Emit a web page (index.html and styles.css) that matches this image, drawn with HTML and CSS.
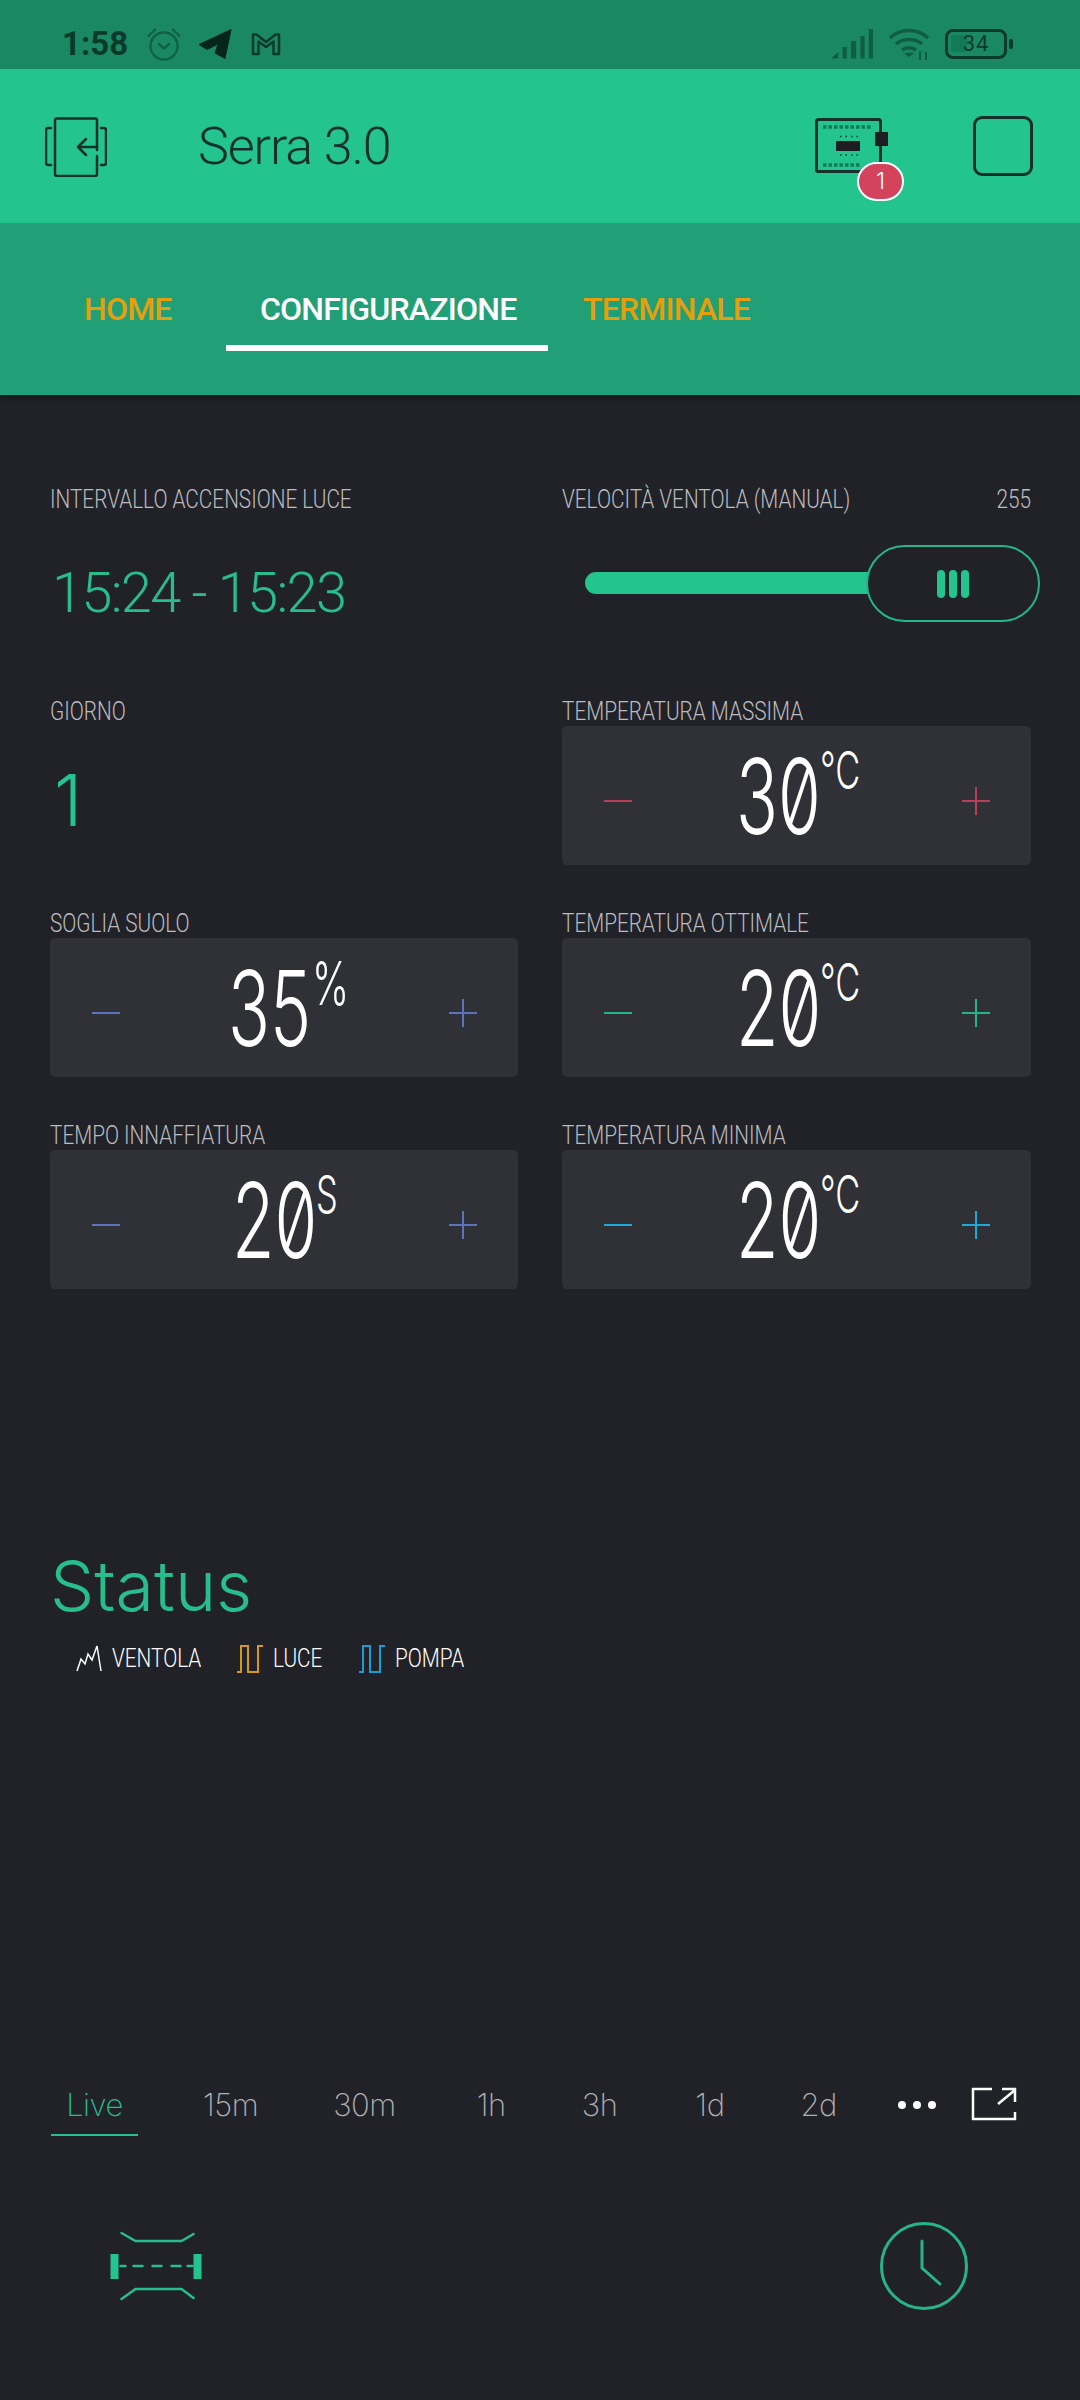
FILE: index.html
```html
<!DOCTYPE html>
<html lang="it">

<head>
    <meta charset="UTF-8">
    <meta name="viewport" content="width=device-width, initial-scale=1.0">
    <title>Serra 3.0</title>
    <link rel="stylesheet" href="styles.css">
</head>

<body>
    <!-- status bar -->
    <div class="status-bar">
        <span class="status-time">1:58</span>
        <svg class="status-icon alarm" viewBox="0 0 34 34" width="34" height="34" fill="none" stroke="#0f6247" stroke-width="2.4">
            <circle cx="17" cy="19" r="13.5" />
            <path d="M12 17l5 4.5 5-4.5" stroke-linecap="round" stroke-linejoin="round" />
            <path d="M1.5 9 8 2.5M32.500 9 26 2.500" stroke-linecap="round" />
        </svg>
        <svg class="status-icon plane" viewBox="0 0 34 30" width="34" height="30">
            <path d="M1 15.500 33 0.500 27 29.500 17 24 20 15 9 20.500 Z" fill="#06261b" stroke="#06261b" stroke-linejoin="round" />
        </svg>
        <svg class="status-icon mail" viewBox="0 0 30 24" width="30" height="24" fill="none" stroke="#0a3a2a" stroke-width="2.500">
            <path d="M2 22V2.500h3.500L15 10l9.500-7.500H28V22h-5.500V9.500L15 15 7.500 9.500V22Z" stroke-linejoin="round" />
        </svg>
        <div class="status-right">
            <svg viewBox="0 0 40 30" width="42" height="30" preserveAspectRatio="none" fill="#0f5e44">
                <path d="M0 29.500 7 23v6.500ZM11 18h4v11.500h-4ZM19 12h5v17.500h-5ZM28 7h4v22.500h-4ZM36 0h4v29.500h-4Z" />
            </svg>
            <svg viewBox="0 0 42 34" width="42" height="34" fill="none" stroke="#0f5e44" stroke-width="3.500">
                <path d="M2 11C12 1 30 1 40 11M8 17c7-6 19-6 26 0M14 23c4-3 10-3 14 0" />
                <path d="M21 30l-5-3.500c3-1.500 7-1.500 10 0Z" fill="#0f5e44" stroke="none" />
                <path d="M32 33V24M38 33v-8" stroke-width="2" />
            </svg>
            <div class="battery">
                <span class="battery-fill"></span>
                <span class="battery-level">34</span>
            </div>
            <span class="battery-tip"></span>
        </div>
    </div>

    <!-- app bar -->
    <header class="app-bar">
        <svg class="back-icon" viewBox="0 0 62 60" width="62" height="60" fill="none" stroke="#14302b" stroke-width="2.500" stroke-linecap="round" stroke-linejoin="round">
            <path d="M10 34V3.500Q10 1.500 12 1.500H50Q52 1.500 52 3.500V33M52 39V57Q52 59 50 59H12Q10 59 10 57V34" />
            <path d="M6 11H3Q1 11 1 13V46Q1 48 3 48H6M56 11H59Q61 11 61 13V46Q61 48 59 48H56" />
            <path d="M52 30H33M41 22l-8 8 8 8" />
        </svg>
        <h1 class="app-title">Serra 3.0</h1>
        <div class="device">
            <svg viewBox="0 0 74 56" width="74" height="56">
                <rect x="1.500" y="1.500" width="64" height="52" rx="2" fill="none" stroke="#14302b" stroke-width="3" />
                <path d="M8 9h48M8 47h38" stroke="#127a58" stroke-width="3.500" stroke-dasharray="3.500 2" fill="none" />
                <rect x="21" y="23" width="24" height="10" fill="#1c1e24" />
                <path d="M25 18.500h18M25 37h18" stroke="#14302b" stroke-width="1.500" stroke-dasharray="1.500 4" fill="none" />
                <rect x="60" y="14" width="13" height="14" fill="#1c1e24" />
            </svg>
            <span class="device-badge">1</span>
        </div>
        <span class="square-btn"></span>
    </header>

    <!-- tabs -->
    <nav class="tabs">
        <a class="tab tab-home">HOME</a>
        <a class="tab tab-conf active">CONFIGURAZIONE</a>
        <a class="tab tab-term">TERMINALE</a>
    </nav>

    <main class="content">
        <section class="widgets">
            <div class="widget">
                <div class="widget-label">INTERVALLO ACCENSIONE LUCE</div>
                <div class="time-value">15:24 - 15:23</div>
            </div>
            <div class="widget">
                <div class="widget-label slider-label"><span>VELOCITÀ VENTOLA (MANUAL)</span><span>255</span></div>
                <div class="slider">
                    <div class="slider-track"></div>
                    <div class="slider-knob"><i></i><i></i><i></i></div>
                </div>
            </div>

            <div class="widget">
                <div class="widget-label">GIORNO</div>
                <div class="day-value">1</div>
            </div>
            <div class="widget">
                <div class="widget-label">TEMPERATURA MASSIMA</div>
                <div class="stepper red">
                    <span class="step minus"></span>
                    <div class="step-value"><span class="num">30</span><span class="unit">°C</span></div>
                    <span class="step plus"></span>
                </div>
            </div>

            <div class="widget">
                <div class="widget-label">SOGLIA SUOLO</div>
                <div class="stepper blue">
                    <span class="step minus"></span>
                    <div class="step-value"><span class="num">35</span><span class="unit pct">%</span></div>
                    <span class="step plus"></span>
                </div>
            </div>
            <div class="widget">
                <div class="widget-label">TEMPERATURA OTTIMALE</div>
                <div class="stepper green">
                    <span class="step minus"></span>
                    <div class="step-value"><span class="num">20</span><span class="unit">°C</span></div>
                    <span class="step plus"></span>
                </div>
            </div>

            <div class="widget">
                <div class="widget-label">TEMPO INNAFFIATURA</div>
                <div class="stepper blue">
                    <span class="step minus"></span>
                    <div class="step-value"><span class="num">20</span><span class="unit sec">S</span></div>
                    <span class="step plus"></span>
                </div>
            </div>
            <div class="widget">
                <div class="widget-label">TEMPERATURA MINIMA</div>
                <div class="stepper cyan">
                    <span class="step minus"></span>
                    <div class="step-value"><span class="num">20</span><span class="unit">°C</span></div>
                    <span class="step plus"></span>
                </div>
            </div>
        </section>

        <!-- grafico -->
        <section class="chart">
            <h2 class="chart-title">Status</h2>
            <div class="legend">
                <div class="legend-item">
                    <svg viewBox="0 0 26 28" width="26" height="28" fill="none" stroke="#fff" stroke-width="1.500">
                        <path d="M1 26 5 14l4 5 3-10 4 6 5-14 4 25" />
                    </svg>
                    <span class="legend-name name-ventola">VENTOLA</span>
                </div>
                <div class="legend-item">
                    <svg viewBox="0 0 26 28" width="26" height="28" fill="none" stroke="#d9961c" stroke-width="2">
                        <path d="M0 27H4V1H11V27H21V1H26" />
                    </svg>
                    <span class="legend-name name-luce">LUCE</span>
                </div>
                <div class="legend-item">
                    <svg viewBox="0 0 26 28" width="26" height="28" fill="none" stroke="#1b9dd0" stroke-width="2">
                        <path d="M0 27H4V1H11V27H21V1H26" />
                    </svg>
                    <span class="legend-name name-pompa">POMPA</span>
                </div>
            </div>

            <div class="periods">
                <span class="period live">Live</span>
                <span class="period p-15">15m</span>
                <span class="period p-30">30m</span>
                <span class="period p-1h">1h</span>
                <span class="period p-3h">3h</span>
                <span class="period p-1d">1d</span>
                <span class="period p-2d">2d</span>
                <span class="more"><i></i><i></i><i></i></span>
                <svg class="expand" viewBox="0 0 46 34" width="46" height="34" fill="none" stroke="#fff" stroke-width="2.500">
                    <path d="M21 2H2V32H44V25" />
                    <path d="M27 17 44 3M31 2H44V15" />
                </svg>
            </div>
        </section>

        <section class="bottom-icons">
            <svg viewBox="0 0 92 70" width="95" height="70" fill="none" stroke="#27bd8c" stroke-width="2.500" stroke-linecap="round">
                <path d="M11 2 25 10H71L83 3M11 68 25 58H71L83 67" />
                <path d="M10 35H15M23 35H32M42 35H51M61 35H70M77 35H82" />
                <rect x="0" y="23" width="8" height="25" fill="#23c48e" stroke="none" />
                <rect x="83" y="23" width="8" height="25" fill="#23c48e" stroke="none" />
            </svg>
            <svg viewBox="0 0 90 90" width="90" height="90" fill="none" stroke="#27b488" stroke-width="3" stroke-linecap="round">
                <circle cx="45" cy="45" r="42.500" />
                <path d="M43 20V47L61 63" />
            </svg>
        </section>
    </main>
</body>

</html>
```

FILE: styles.css
```css
/* global */
body {
    margin: 0;
    padding: 0;
    width: 1080px;
    height: 2400px;
    overflow: hidden;
    background-color: #212227;
    font-family: Inter, "Liberation Sans", sans-serif;
    font-weight: 300;
}

/* status bar */
.status-bar {
    height: 69px;
    background-color: #1b8864;
    display: flex;
    align-items: center;
    padding-top: 18px;
    padding-left: 62px;
    padding-right: 67px;
    box-sizing: border-box;
}

.status-time {
    font-family: Roboto, sans-serif;
    font-weight: 700;
    font-size: 33px;
    color: #0a3a2a;
    margin-right: 19px;
}

.status-icon {
    margin-right: 17px;
}

.status-icon.plane {
    margin-left: 0;
    margin-right: 19px;
}

.status-right {
    margin-left: auto;
    display: flex;
    align-items: center;
    gap: 15px;
}

.battery {
    position: relative;
    width: 62px;
    height: 30px;
    box-sizing: border-box;
    border: 3.5px solid #0a3a2a;
    border-radius: 8px;
    text-align: center;
    font-family: Roboto, sans-serif;
    font-weight: 400;
    font-size: 22px;
    line-height: 23px;
    color: #0a3a2a;
    letter-spacing: 1px;
}

.battery-fill {
    position: absolute;
    left: 3px;
    top: 3px;
    width: 16px;
    height: 17px;
    border-radius: 2px;
    background-color: #137a58;
}

.battery-level {
    position: relative;
}

.battery-tip {
    width: 4px;
    height: 10px;
    background-color: #0a3a2a;
    border-radius: 2px;
    margin-left: -13px;
}

/* app bar */
.app-bar {
    height: 154px;
    background-color: #23c48e;
    display: flex;
    align-items: center;
    padding-left: 45px;
    box-sizing: border-box;
}

.back-icon {
    margin-top: 1px;
}

.app-title {
    margin: 0 0 0 91px;
    font-family: Roboto, sans-serif;
    font-size: 52px;
    font-weight: 300;
    color: #14302b;
    letter-spacing: -1.1px;
}

.device {
    position: relative;
    margin-left: auto;
    width: 74px;
    height: 56px;
}

.device-badge {
    position: absolute;
    left: 42px;
    top: 44px;
    width: 47px;
    height: 39px;
    box-sizing: border-box;
    border: 2px solid #fff;
    border-radius: 20px;
    background-color: #d3435c;
    color: #fff;
    font-size: 23px;
    line-height: 35px;
    text-align: center;
}

.square-btn {
    width: 60px;
    height: 60px;
    box-sizing: border-box;
    border: 3px solid #14302b;
    border-radius: 9px;
    margin-left: 84px;
    margin-right: 47px;
}

/* tabs */
.tabs {
    height: 172px;
    background-color: #219f76;
    box-shadow: 0 4px 6px rgba(0, 0, 0, 0.25);
    display: flex;
    box-sizing: border-box;
    padding-top: 66px;
}

.tab {
    font-family: Roboto, sans-serif;
    font-size: 32px;
    font-weight: 500;
    letter-spacing: -0.8px;
    line-height: 40px;
    color: #e59f0c;
    height: 62px;
    box-sizing: border-box;
    white-space: nowrap;
}

.tab-home {
    margin-left: 84px;
    width: 142px;
}

.tab-conf {
    width: 322px;
    padding-left: 34px;
    color: #fff;
    border-bottom: 6px solid #fff;
}

.tab-term {
    margin-left: 35px;
}

/* widgets */
.content {
    display: flex;
    flex-direction: column;
}

.widgets {
    display: grid;
    grid-template-columns: 468px 469px;
    grid-auto-rows: 168px;
    column-gap: 44px;
    row-gap: 44px;
    padding: 90px 0 0 50px;
}

/* the label font is a narrow DIN, Roboto gets squeezed to its width */
.widget-label {
    width: 120.5%;
    height: 29px;
    font-family: Roboto, sans-serif;
    font-weight: 300;
    font-size: 25px;
    line-height: 29px;
    color: #bcbcc0;
    white-space: nowrap;
    transform: scaleX(0.83);
    transform-origin: left center;
}

.slider-label {
    display: flex;
    justify-content: space-between;
}

.time-value {
    margin-top: 46px;
    margin-left: 2px;
    font-family: Roboto, sans-serif;
    font-size: 56px;
    line-height: 66px;
    color: #27bd8c;
    letter-spacing: -1.7px;
}

.day-value {
    margin-top: 34px;
    margin-left: 4px;
    font-size: 72px;
    line-height: 80px;
    color: #23c48e;
}

/* slider */
.slider {
    position: relative;
    height: 77px;
    margin-top: 31px;
}

.slider-track {
    position: absolute;
    left: 23px;
    top: 27px;
    width: 300px;
    height: 22px;
    border-radius: 11px;
    background-color: #23c48e;
}

.slider-knob {
    position: absolute;
    left: 304px;
    top: 0;
    width: 174px;
    height: 77px;
    box-sizing: border-box;
    border: 2.500px solid #27b488;
    border-radius: 39px;
    background-color: #212227;
    display: flex;
    justify-content: center;
    align-items: center;
    gap: 4px;
}

.slider-knob i {
    width: 8px;
    height: 28px;
    border-radius: 4px;
    background-color: #23c48e;
}

/* stepper */
.stepper {
    height: 139px;
    border-radius: 5px;
    background-color: #303136;
    display: flex;
    align-items: center;
    justify-content: space-between;
    padding: 0 41px 0 42px;
}

.step {
    position: relative;
    width: 28px;
    height: 28px;
    flex-shrink: 0;
    margin-top: 11px;
}

.step::before,
.plus::after {
    content: "";
    position: absolute;
    background-color: currentColor;
}

.step::before {
    left: 0;
    top: 13px;
    width: 28px;
    height: 2px;
}

.plus::after {
    left: 13px;
    top: 0;
    width: 2px;
    height: 28px;
}

.red .step {
    color: #bb3e58;
}

.blue .step {
    color: #5b74bd;
}

.green .step {
    color: #27b488;
}

.cyan .step {
    color: #1fa7d6;
}

.step-value {
    display: flex;
    align-items: flex-start;
    color: #fff;
}

.num {
    display: inline-block;
    width: 84px;
    font-size: 105px;
    line-height: 110px;
    font-weight: 300;
    font-feature-settings: "zero";
    transform: scaleX(0.66);
    transform-origin: left center;
    white-space: nowrap;
}

.unit {
    display: inline-block;
    width: 38px;
    font-size: 52px;
    line-height: 56px;
    font-weight: 300;
    white-space: nowrap;
    transform: scaleX(0.66);
    transform-origin: left center;
    margin-top: 2px;
}

.unit.pct {
    font-size: 60px;
    width: 30px;
}

.unit.sec {
    width: 22px;
}

/* chart */
.chart {
    margin-top: 255px;
    padding-left: 50px;
}

.chart-title {
    margin: 0;
    font-size: 70px;
    line-height: 84px;
    font-weight: 300;
    color: #27bd8c;
}

.legend {
    display: flex;
    margin-top: 16px;
    margin-left: 26px;
    gap: 35px;
}

.legend-item {
    display: flex;
    align-items: center;
    gap: 10px;
    font-family: Roboto, sans-serif;
    font-weight: 300;
    font-size: 25px;
    color: #fff;
}

.legend-name {
    display: inline-block;
    white-space: nowrap;
    transform: scaleX(0.83);
    transform-origin: left center;
}

.name-ventola {
    width: 90px;
}

.name-luce {
    width: 51px;
}

.name-pompa {
    width: 69px;
}

.periods {
    display: flex;
    align-items: flex-start;
    margin-top: 412px;
    height: 70px;
    margin-left: 1px;
}

.period {
    font-size: 31px;
    line-height: 40px;
    color: #b0b0b4;
    font-weight: 200;
    padding-bottom: 9px;
    text-align: center;
    letter-spacing: -0.5px;
}

.live {
    width: 87px;
    color: #27bd8c;
    border-bottom: 2.500px solid #27bd8c;
}

.p-15 {
    margin-left: 65px;
}

.p-30 {
    margin-left: 75px;
}

.p-1h {
    margin-left: 81px;
}

.p-3h {
    margin-left: 76px;
}

.p-1d {
    margin-left: 78px;
}

.p-2d {
    margin-left: 76px;
}

.more {
    display: flex;
    gap: 7px;
    margin-left: 61px;
    margin-top: 16px;
}

.more i {
    width: 8px;
    height: 8px;
    border-radius: 50%;
    background-color: #fff;
}

.expand {
    margin-left: 35px;
    margin-top: 2px;
}

.bottom-icons {
    display: flex;
    justify-content: space-between;
    align-items: center;
    margin-top: 66px;
    padding: 0 111px 0 109px;
}
```
